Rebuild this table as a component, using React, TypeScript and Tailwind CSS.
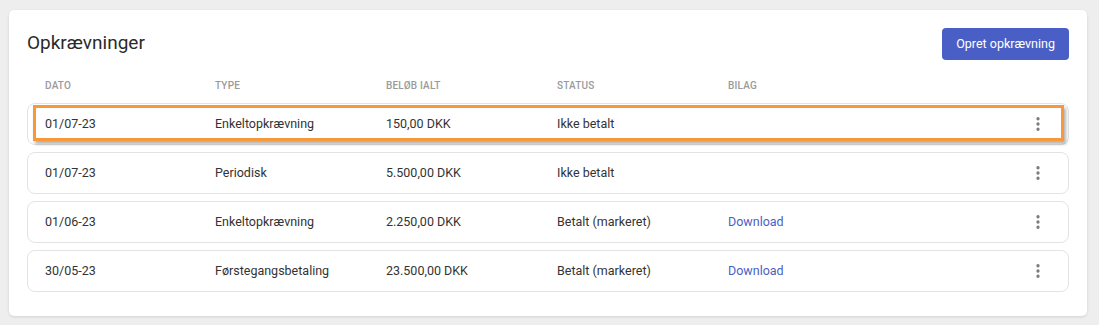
import { EllipsisVertical } from "lucide-react";

type Charge = {
  date: string;
  type: string;
  amount: string;
  status: string;
  attachment?: boolean;
  highlighted?: boolean;
};

const charges: Charge[] = [
  { date: "01/07-23", type: "Enkeltopkrævning", amount: "150,00 DKK", status: "Ikke betalt", highlighted: true },
  { date: "01/07-23", type: "Periodisk", amount: "5.500,00 DKK", status: "Ikke betalt" },
  { date: "01/06-23", type: "Enkeltopkrævning", amount: "2.250,00 DKK", status: "Betalt (markeret)", attachment: true },
  { date: "30/05-23", type: "Førstegangsbetaling", amount: "23.500,00 DKK", status: "Betalt (markeret)", attachment: true },
];

const cols = "grid grid-cols-[170px_171px_171px_171px_1fr_40px] items-center";

const ChargeRow = ({ charge }: { charge: Charge }) => {
  return (
    <div className="relative h-[42px] rounded-lg border border-[#e3e3e3] bg-white pl-[17px] pr-[21px]">
      <div className={`${cols} h-full text-[12.5px] text-[#333]`}>
        <span>{charge.date}</span>
        <span>{charge.type}</span>
        <span>{charge.amount}</span>
        <span>{charge.status}</span>
        <span>
          {charge.attachment && (
            <a className="text-[#4a5fc6] cursor-pointer">Download</a>
          )}
        </span>
        <span className="flex justify-end">
          <EllipsisVertical size={18} strokeWidth={2.4} className="text-[#7a7a7a]" />
        </span>
      </div>
      {charge.highlighted && (
        <div className="pointer-events-none absolute left-[5px] right-[4px] top-[1px] bottom-[3px] border-[3px] border-[#f7993a] shadow-[2px_3px_3px_rgba(0,0,0,0.3)]"></div>
      )}
    </div>
  );
};

const App = () => {
  return (
    <div className="min-h-[325px] w-full bg-[#eeeeee] px-[9px] pt-[10px] font-['Roboto',sans-serif]">
      <div className="w-[1078px] rounded-[5px] bg-white px-[18px] pt-[18px] pb-[24px] shadow-[0_1px_3px_rgba(0,0,0,0.12)]">
        <div className="flex items-center justify-between">
          <h1 className="-mt-[2px] text-[19px] text-[#2b2b2b]">Opkrævninger</h1>
          <button className="h-[32px] rounded-[4px] bg-[#4a5fc6] px-[14px] text-[12.5px] text-white">
            Opret opkrævning
          </button>
        </div>
        <div className={`${cols} mt-[18px] pl-[18px] pr-[21px] text-[10px] font-medium uppercase tracking-[0.2px] text-[#9a9a9a]`}>
          <span>Dato</span>
          <span>Type</span>
          <span>Beløb ialt</span>
          <span>Status</span>
          <span>Bilag</span>
          <span></span>
        </div>
        <div className="mt-[10px] flex flex-col gap-[7px]">
          {charges.map((c, i) => (
            <ChargeRow key={i} charge={c} />
          ))}
        </div>
      </div>
    </div>
  );
};

export default App;
